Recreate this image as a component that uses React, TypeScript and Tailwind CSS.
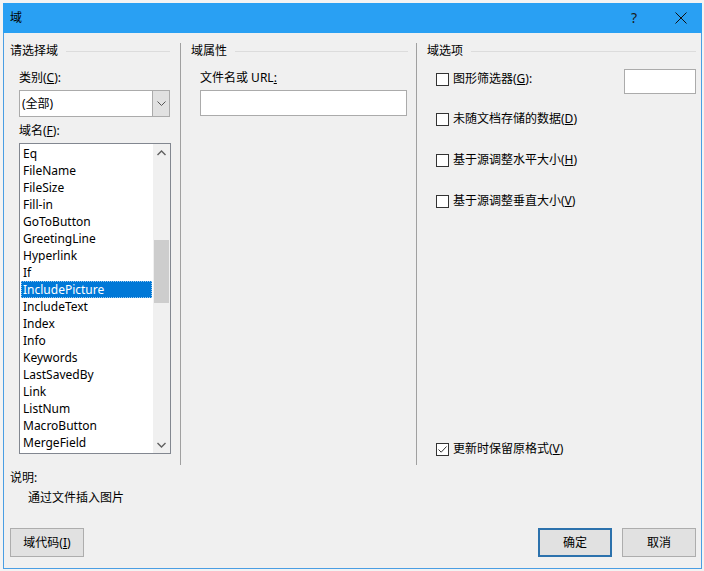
import { useState } from "react";

const FIELDS = [
  "Eq",
  "FileName",
  "FileSize",
  "Fill-in",
  "GoToButton",
  "GreetingLine",
  "Hyperlink",
  "If",
  "IncludePicture",
  "IncludeText",
  "Index",
  "Info",
  "Keywords",
  "LastSavedBy",
  "Link",
  "ListNum",
  "MacroButton",
  "MergeField",
];

function GroupHeader({ title }: { title: string }) {
  return (
    <div className="flex h-4 items-center">
      <span className="leading-4">{title}</span>
      <div className="ml-[8px] h-px flex-1 bg-[#dcdcdc]" />
    </div>
  );
}

function Check({ checked }: { checked?: boolean }) {
  return (
    <div className="flex h-[13px] w-[13px] shrink-0 items-center justify-center border border-[#333] bg-white">
      {checked && (
        <svg width="11" height="11" viewBox="0 0 11 11">
          <path d="M1.5 5.5 L4.2 8.2 L9.5 2.5" fill="none" stroke="#333" strokeWidth="1" />
        </svg>
      )}
    </div>
  );
}

function CheckRow({ label, checked }: { label: React.ReactNode; checked?: boolean }) {
  return (
    <div className="flex h-[14px] items-center gap-[4px] pl-[9px]">
      <Check checked={checked} />
      <span className="leading-[14px]">{label}</span>
    </div>
  );
}

function Btn({ children, primary }: { children: React.ReactNode; primary?: boolean }) {
  return (
    <button
      className={
        primary
          ? "flex h-[29px] w-[74px] items-center justify-center border-2 border-[#2c72ad] bg-[#e1e1e1]"
          : "flex h-[29px] w-[74px] items-center justify-center border border-[#adadad] bg-[#e1e1e1]"
      }
    >
      {children}
    </button>
  );
}

export default function App() {
  const [sel] = useState("IncludePicture");

  return (
    <div
      className="h-[571px] w-[704px] overflow-hidden bg-[#f3f3f3] pl-[3px] pt-[3px] text-[12px] text-black"
      style={{ fontFamily: '"Noto Sans", "Noto Sans CJK SC", sans-serif' }}
    >
      <div className="flex h-[566px] w-[699px] flex-col border-x border-b border-[#4a9ee3] bg-[#f0f0f0]">
        {/* title bar */}
        <div className="-mx-px flex h-[30px] shrink-0 items-center bg-[#29a0f3] pl-[7px]">
          <span className="flex-1 leading-4">域</span>
          <span className="w-[10px] text-[14px] leading-4 text-[#1a1a1a]">?</span>
          <div className="ml-[33px] mr-[15px] flex h-[30px] w-[13px] items-center justify-center">
            <svg width="12" height="12" viewBox="0 0 12 12">
              <path d="M0.5 0.5 L11.5 11.5 M11.5 0.5 L0.5 11.5" stroke="#111" strokeWidth="1" />
            </svg>
          </div>
        </div>

        {/* columns */}
        <div className="mt-[10px] flex h-[422px] shrink-0">
          {/* column 1 */}
          <div className="flex w-[176px] flex-col pl-[6px] pr-[9px]">
            <div className="pr-px">
              <GroupHeader title="请选择域" />
            </div>
            <div className="mt-[11px] pl-[9px] leading-4">
              类别(<span className="underline">C</span>):
            </div>
            <div className="ml-[9px] mt-[4px] flex h-[27px] w-[151px] border border-[#ababab] bg-white">
              <div className="flex flex-1 items-center pl-[2px]">(全部)</div>
              <div className="flex w-[17px] items-center justify-center border-l border-[#ababab] bg-[#e1e1e1]">
                <svg width="9" height="6" viewBox="0 0 9 6">
                  <path d="M0.5 0.5 L4.5 4.5 L8.5 0.5" fill="none" stroke="#555" strokeWidth="1" />
                </svg>
              </div>
            </div>
            <div className="mt-[6px] pl-[9px] leading-4">
              域名(<span className="underline">F</span>):
            </div>
            <div className="ml-[9px] mt-[4px] flex h-[311px] w-[152px] border border-[#828790] bg-white">
              <div className="flex-1 overflow-hidden pl-px pt-px">
                {FIELDS.map((f) => (
                  <div
                    key={f}
                    className={
                      f === sel
                        ? "h-[17px] border border-dotted border-[#99c9ef] bg-[#0078d7] pl-px leading-[15px] text-white"
                        : "h-[17px] pl-[2px] leading-[17px]"
                    }
                  >
                    {f}
                  </div>
                ))}
              </div>
              <div className="ml-px flex w-[17px] flex-col bg-[#f0f0f0]">
                <div className="flex h-[17px] items-center justify-center">
                  <svg width="9" height="6" viewBox="0 0 9 6">
                    <path d="M0.5 5 L4.5 1 L8.5 5" fill="none" stroke="#606060" strokeWidth="1.4" />
                  </svg>
                </div>
                <div className="relative flex-1">
                  <div className="absolute left-px top-[79px] h-[63px] w-[15px] bg-[#cdcdcd]" />
                </div>
                <div className="flex h-[17px] items-center justify-center">
                  <svg width="9" height="6" viewBox="0 0 9 6">
                    <path d="M0.5 1 L4.5 5 L8.5 1" fill="none" stroke="#606060" strokeWidth="1.4" />
                  </svg>
                </div>
              </div>
            </div>
          </div>

          <div className="w-px bg-[#a0a0a0]" />

          {/* column 2 */}
          <div className="flex w-[235px] flex-col pl-[10px] pr-[8px]">
            <GroupHeader title="域属性" />
            <div className="mt-[11px] pl-[9px] leading-4">
              文件名或 URL<span className="underline">:</span>
            </div>
            <div className="ml-[9px] mt-[4px] h-[26px] w-[207px] border border-[#ababab] bg-white" />
          </div>

          <div className="w-px bg-[#a0a0a0]" />

          {/* column 3 */}
          <div className="flex flex-1 flex-col pb-[9px] pl-[10px] pr-[5px]">
            <GroupHeader title="域选项" />
            <div className="mt-[10px] flex items-start justify-between">
              <div className="pt-[3px]">
                <CheckRow
                  label={
                    <>
                      图形筛选器(<span className="underline">G</span>):
                    </>
                  }
                />
              </div>
              <div className="h-[25px] w-[72px] border border-[#ababab] bg-white" />
            </div>
            <div className="mt-[18px]">
              <CheckRow
                label={
                  <>
                    未随文档存储的数据(<span className="underline">D</span>)
                  </>
                }
              />
            </div>
            <div className="mt-[27px]">
              <CheckRow
                label={
                  <>
                    基于源调整水平大小(<span className="underline">H</span>)
                  </>
                }
              />
            </div>
            <div className="mt-[27px]">
              <CheckRow
                label={
                  <>
                    基于源调整垂直大小(<span className="underline">V</span>)
                  </>
                }
              />
            </div>
            <div className="mt-auto">
              <CheckRow
                checked
                label={
                  <>
                    更新时保留原格式(<span className="underline">V</span>)
                  </>
                }
              />
            </div>
          </div>
        </div>

        {/* description */}
        <div className="mt-[5px] pl-[6px] leading-4">说明:</div>
        <div className="mt-[4px] pl-[24px] leading-4">通过文件插入图片</div>

        {/* buttons */}
        <div className="mt-[22px] flex items-center pl-[6px] pr-[5px]">
          <Btn>
            域代码(<span className="underline">I</span>)
          </Btn>
          <div className="flex-1" />
          <Btn primary>确定</Btn>
          <div className="w-[10px]" />
          <Btn>取消</Btn>
        </div>
      </div>
    </div>
  );
}
